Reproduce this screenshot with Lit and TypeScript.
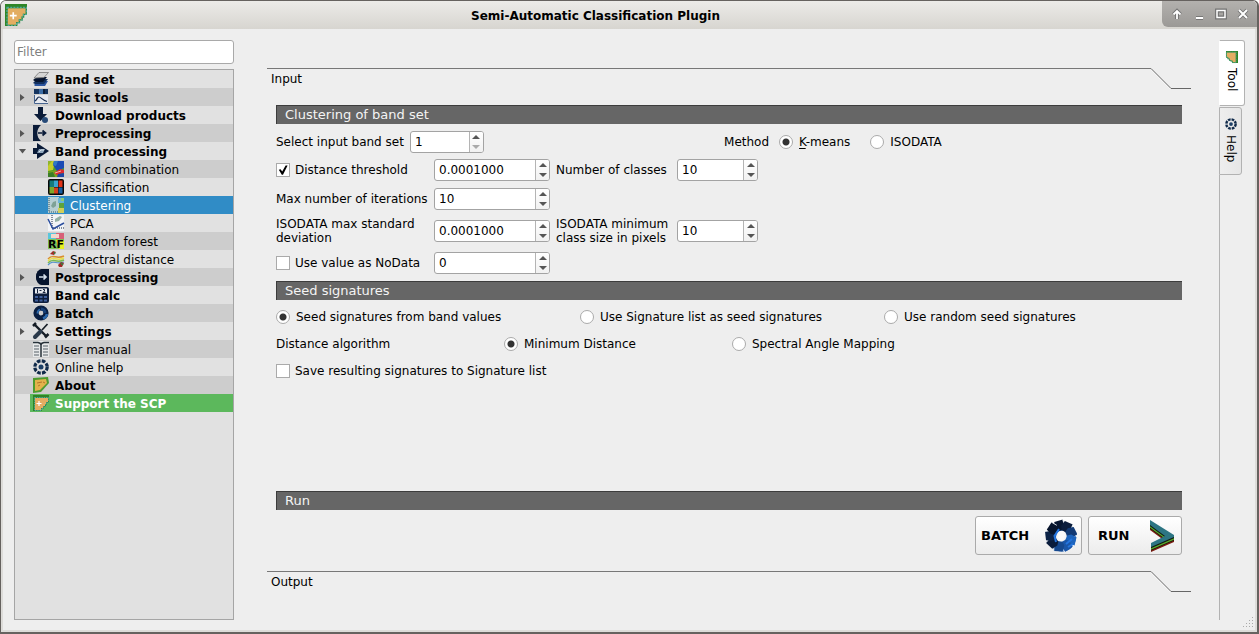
import { LitElement, html, css, svg, nothing } from "lit";
import { customElement, property, state } from "lit/decorators.js";
import { classMap } from "lit/directives/class-map.js";

const leaf = (plus: boolean) => svg`
  <path d="M0 0H16V8H14V10H13V12H11V14H9V16H0Z" fill="#2f8526"/>
  <path d="M2 3H15V7H13V9H12V11H10V13H8V15H2Z" fill="#e3ad62"/>
  <path d="M1.500 2.500H15.500V7.500H13.500V9.500H12.500V11.500H10.500V13.500H8.500V15.500H1.500Z" fill="none" stroke="#4fa79b" stroke-dasharray="1.500 .8"/>
  ${plus ? svg`<path d="M3.500 8.500H8.500M6 6V11" stroke="#fff" stroke-width="1.200"/>` : nothing}`;

const wheel = (r: number, w: number) => svg`
  <circle cx="8" cy="8" r="${r}" fill="none" stroke="#102a4a" stroke-width="${w}" stroke-dasharray="3.600 1.270"/>
  <circle cx="8" cy="8" r="2.500" fill="#1c3f66"/>`;

const runLayer = "M5 1L29 16V18L6 28V24L20 17L5 6Z";

const ringShades = ["#071630", "#0b1d3c", "#123a75", "#1d64bd", "#1a56a8", "#16498f", "#0a1c3b", "#0c2347", "#06142c"];

const icons: Record<string, unknown> = {
  leafplus: leaf(true),
  leaf: leaf(false),
  bandset: svg`
    <path d="M1 14L5 10H15L12 15H2Z" fill="#2a55a0"/>
    <path d="M0 12L4 8H15L11 13H2Z" fill="#12305e"/>
    <path d="M0 9L4 6H14L10 11H3Z" fill="#06142e"/>
    <path d="M1 7L6 1.500H15.500L11 6.500Z" fill="#d4d4d4" stroke="#777" stroke-width=".8"/>`,
  basic: svg`
    <path d="M1 0H15V5H1Z" fill="#15345f"/><path d="M6 0H10V5H6Z" fill="#3c6da6"/><path d="M10 0H12V5H10Z" fill="#0b1d38"/>
    <path d="M1 6H15V15H1Z" fill="#e6e9ef"/>
    <path d="M1.500 6V14.500H15" fill="none" stroke="#47648f"/>
    <path d="M2 12C4 11 4 8 6 8S9 11 14 12.500" fill="none" stroke="#1b2f52" stroke-width="1.200"/>`,
  download: svg`<path d="M5 0H10V7H14L7.500 14L1 7H5Z" fill="#0a1b38"/><circle cx="12" cy="13" r="3" fill="#264a78"/>`,
  pre: svg`<path d="M0 0H8C3 4 3 12 8 16H0Z" fill="#0a1b38"/><path d="M5 8H12M9.500 5.500L12.500 8L9.500 10.500" fill="none" stroke="#0a1b38" stroke-width="1.700"/>`,
  process: svg`<path d="M4 0L16 8L4 16V11H0V5H4Z" fill="#0a1b38"/><path d="M4 10L6 6H12L10 10H5Z" fill="#8ea5bb"/><path d="M6 9L8 7H11" stroke="#dbe5ec" fill="none"/>`,
  combo: svg`<path d="M0 0H16V16H0Z" fill="#4f9a2d"/><path d="M0 0H7L5 9L0 10Z" fill="#c4cc2a"/><path d="M0 0H4L0 5Z" fill="#8fb52b"/><path d="M6 0H16V7L9 10L5 4Z" fill="#1a4ab4"/><path d="M6 0H10L8 5L5 4Z" fill="#2f78c4"/><path d="M0 11L8 9L11 16H0Z" fill="#77a51f"/><path d="M0 12L5 11L7 16H0Z" fill="#3c7d28"/><path d="M6 12L12 8L16 9V12L9 14Z" fill="#de2a2f"/><path d="M10 13L16 12V16H9Z" fill="#1e47a5"/><path d="M7 12L13 10" stroke="#f0b1a8"/>`,
  classes: svg`<rect width="16" height="16" rx="2" fill="#080808"/><path d="M1.500 1.500H6V8H1.500Z" fill="#167b7b"/><path d="M6 1.500H10V8H6Z" fill="#3aa5cf"/><path d="M10.500 1.500H14.500V8H10.500Z" fill="#e13317"/><path d="M1.500 8H6V14.500H1.500Z" fill="#7ea82a"/><path d="M6 8.500H10V14.500H6Z" fill="#d4411c"/><path d="M10.500 8.500H14.500V14.500H10.500Z" fill="#175ea2"/>`,
  cluster: svg`<path d="M0 0H11V16H0Z" fill="#b7cfd3"/><path d="M1 1V15H10" fill="none" stroke="#32586b" stroke-dasharray="1 1"/><path d="M3 9L5 5L8 4L8 9L5 11Z" fill="#7ea296"/><path d="M10 1H16V6H10Z" fill="#68b5d7"/><path d="M11 6H16V11H11Z" fill="#5da33c"/><path d="M10 11H16V16H10Z" fill="#d1cf5a"/><path d="M13 1H16V4H13Z" fill="#8ccb78"/>`,
  pca: svg`<path d="M0 0H16V16H0Z" fill="#f2f4f6"/><path d="M7 4L12 1L14 2L11 6L7 7Z" fill="#94b0a5"/><path d="M4 0V13H16" stroke="#172640" stroke-dasharray="1 1" fill="none"/><path d="M0 4L5 14L16 8" fill="none" stroke="#2c4e9d" stroke-width="1.500"/>`,
  forest: svg`<path d="M0 0H8V8H0Z" fill="#59c6dc"/><path d="M8 0H16V6H8Z" fill="#d86178"/><path d="M3 1H11V5H3Z" fill="#f2d8cc"/><path d="M0 6H16V16H0Z" fill="#7dc35a"/><path d="M8 7H16V16H11Z" fill="#e7ef20"/><text x="8" y="15" text-anchor="middle" font-family="DejaVu Sans" font-size="11" font-weight="700">RF</text>`,
  spectral: svg`<path d="M0 8C5 2 8 9 16 5" fill="none" stroke="#da8d2c" stroke-width="1.500"/><path d="M0 10C5 4 8 11 16 7" fill="none" stroke="#e9df4a" stroke-width="1.500"/><path d="M0 12C5 6 8 13 16 9" fill="none" stroke="#79b953" stroke-width="1.500"/><path d="M0 14C5 8 8 14 16 11" fill="none" stroke="#5793cc" stroke-width="1.200"/><path d="M2 3L5 0L8 1L6 4Z" fill="#a22b26"/><path d="M10 14L13 11L16 12L14 16H11Z" fill="#a22b26"/><path d="M6 1L7 3M13 12L15 14" stroke="#328642" stroke-width="1.300"/>`,
  post: svg`<path d="M11 0H16V16H11A8 8 0 0 1 11 0Z" fill="#06142e"/><path d="M9 0H16V16H9A6 8 0 0 1 9 0Z" fill="#06142e"/><path d="M6 8H13M10.500 5.500L13 8L10.500 10.500" fill="none" stroke="#d4dfea" stroke-width="1.700"/>`,
  calc: svg`<rect width="16" height="16" rx="2" fill="#0d1d3b"/><path d="M2 1.500H14V6.500H2Z" fill="#e6e9ee"/><path d="M4.500 2V6M6.500 3.500H8.500M10 2.500H11.500V4L10 5.500H12.500" fill="none" stroke="#16233c"/><path d="M2 9H5V11H2ZM6.500 9H9.500V11H6.500ZM11 9H14V11H11ZM2 12.500H5V14.500H2ZM6.500 12.500H9.500V14.500H6.500ZM11 12.500H14V14.500H11Z" fill="#3f5f9c"/>`,
  batch: svg`<circle cx="8" cy="8" r="5" fill="none" stroke="#091f43" stroke-width="5.200"/><path d="M8 4A4 4 0 0 1 12 8" fill="none" stroke="#173f76" stroke-width="3"/><path d="M10 13.500A6 6 0 0 0 14 9" fill="none" stroke="#2b69ad" stroke-width="2.500"/><path d="M7 4.500A4 4 0 0 0 4.500 8.500" fill="none" stroke="#2b69ad" stroke-width="1.800"/>`,
  settings: svg`<path d="M2 2L13 13" stroke="#161d26" stroke-width="2.400"/><path d="M14.500 1L9 7" stroke="#161d26" stroke-width="1.700"/><path d="M7.500 8.500L2 14" stroke="#2b3a4b" stroke-width="4" stroke-linecap="round"/><path d="M0 3L3 0M12 14.500L15.500 11" stroke="#161d26" stroke-width="2.500"/>`,
  manual: svg`<path d="M0 0H16V16H0Z" fill="#e6e8e9"/><path d="M0 1.500H5Q8 2 8 4Q8 2 11 1.500H16M8 4V16" fill="none" stroke="#273139" stroke-width="1.500"/><path d="M1 5H6M1 8H6M1 11H6M1 14H6M10 5H15M10 8H15M10 11H15M10 14H15" stroke="#566169" stroke-width="1.200"/>`,
  help: wheel(6.2, 3.2),
  about: svg`<path d="M0 1L15 0L16 6L8 15L0 16Z" fill="#4c9b2e"/><path d="M2 3L13 2L14 6L7 13L2 14Z" fill="#e3b24b"/><path d="M4 6L9 5M5 9L7 8M10 5L12 6" stroke="#b4762b"/>`,
};

const icon = (name: string) => html`<svg class="icon" viewBox="0 0 16 16" aria-hidden="true">${icons[name]}</svg>`;

type Item = { label: string; icon: string; kind?: "child" | "plain" | "support"; arrow?: "open" | "closed" };

const items: Item[] = [
  { label: "Band set", icon: "bandset" },
  { label: "Basic tools", icon: "basic", arrow: "closed" },
  { label: "Download products", icon: "download" },
  { label: "Preprocessing", icon: "pre", arrow: "closed" },
  { label: "Band processing", icon: "process", arrow: "open" },
  { label: "Band combination", icon: "combo", kind: "child" },
  { label: "Classification", icon: "classes", kind: "child" },
  { label: "Clustering", icon: "cluster", kind: "child" },
  { label: "PCA", icon: "pca", kind: "child" },
  { label: "Random forest", icon: "forest", kind: "child" },
  { label: "Spectral distance", icon: "spectral", kind: "child" },
  { label: "Postprocessing", icon: "post", arrow: "closed" },
  { label: "Band calc", icon: "calc" },
  { label: "Batch", icon: "batch" },
  { label: "Settings", icon: "settings", arrow: "closed" },
  { label: "User manual", icon: "manual", kind: "plain" },
  { label: "Online help", icon: "help", kind: "plain" },
  { label: "About", icon: "about" },
  { label: "Support the SCP", icon: "leafplus", kind: "support" },
];

@customElement("spin-box")
export class SpinBox extends LitElement {
  @property() value = "0";
  @property() label = "";
  @property({ type: Number }) decimals = 0;
  @property({ type: Number }) min = 0;

  static styles = css`
    :host { display: block; }
    .spin { display: flex; box-sizing: border-box; height: 22px; border: 1px solid #a3a3a3; border-radius: 3px; background: #fff; overflow: hidden; }
    .field { flex: 1; min-width: 0; border: 0; padding: 0 4px; outline: none; background: transparent; color: #000; font: 12px "DejaVu Sans", sans-serif; }
    .steps { display: flex; flex-direction: column; width: 13px; border-left: 1px solid #b4b4b4; background: linear-gradient(#fff, #f1f1f1); }
    .step { flex: 1; display: flex; align-items: center; justify-content: center; min-height: 0; border: 0; padding: 0; background: none; }
    .glyph { width: 8px; height: 4px; fill: #555; }
    .step:disabled .glyph { fill: #aaa; }
  `;

  private step(direction: number) {
    const next = Number(this.value) + direction / 10 ** this.decimals;
    this.value = Math.max(this.min, next).toFixed(this.decimals ? 7 : 0);
  }

  render() {
    return html`<div class="spin">
      <input class="field" aria-label=${this.label} .value=${this.value}
        @change=${(e: Event) => (this.value = (e.target as HTMLInputElement).value)} />
      <div class="steps">
        <button class="step" type="button" aria-label="Increase" @click=${() => this.step(1)}><svg class="glyph" viewBox="0 0 8 4"><path d="M0 4L4 0L8 4Z"/></svg></button>
        <button class="step" type="button" aria-label="Decrease" ?disabled=${this.min > 0 && Number(this.value) <= this.min} @click=${() => this.step(-1)}><svg class="glyph" viewBox="0 0 8 4"><path d="M0 0L4 4L8 0Z"/></svg></button>
      </div>
    </div>`;
  }
}

@customElement("app-root")
export class AppRoot extends LitElement {
  @state() private selected = "Clustering";

  static styles = css`
    :host { display: block; font: 12px/14px "DejaVu Sans", sans-serif; color: #000; }
    .window { box-sizing: border-box; min-height: 100vh; display: flex; flex-direction: column; border: 1px solid #66625f; border-right-width: 2px; border-bottom-width: 2px; border-radius: 6px 6px 0 0; background: #eee; position: relative; box-shadow: inset 2px 0 #dddcd9, inset -2px -2px #dddcd9; }
    .titlebar { display: flex; align-items: stretch; height: 28px; background: linear-gradient(#ecebe8, #d7d5d0); border-radius: 5px 5px 0 0; }
    .logo { padding: 3px 0 0 4px; width: 24px; }
    .logo .icon { width: 22px; height: 22px; }
    .title { flex: 1; margin: 0; text-align: center; font-size: 12px; line-height: 30px; font-weight: 700; }
    .controls { display: flex; align-items: center; gap: 8px; height: 26px; padding: 0 7px 0 8px; background: linear-gradient(#b3b1ae, #9b9996); border-bottom-left-radius: 6px; border-top-right-radius: 5px; }
    .control { display: flex; border: 0; padding: 0; background: none; }
    .control svg { width: 14px; height: 14px; fill: none; }
    .body { flex: 1; display: flex; padding: 11px 12px 12px 13px; }

    .sidebar { flex: none; width: 220px; display: flex; flex-direction: column; gap: 5px; }
    .filter { box-sizing: border-box; width: 100%; height: 24px; border: 1px solid #a9a9a9; border-radius: 3px; padding: 0 2px; outline: none; background: #fff; font: 12px "DejaVu Sans", sans-serif; }
    .filter::placeholder { color: #808080; opacity: 1; }
    .tree { flex: 1; margin: 0; padding: 0; list-style: none; border: 1px solid #a5a5a5; background: #e1e1e1; }
    .row { display: flex; height: 18px; }
    .row:nth-child(even) { background: #cdcdcd; }
    .branch { flex: none; display: flex; align-items: center; padding-left: 4px; width: 11px; }
    .branch svg { width: 7px; height: 7px; fill: #555; }
    .entry { flex: 1; display: flex; align-items: center; gap: 6px; border: 0; padding: 0 3px; background: none; color: #000; font: 700 12px/18px "DejaVu Sans", sans-serif; text-align: left; }
    .label { padding-top: 2px; }
    .plain .entry, .child .entry { font-weight: 400; }
    .child .entry { padding-left: 18px; }
    .support .entry { background: #5cb85c; color: #fff; }
    .row.selected { background: #308cc6; }
    .selected .entry { color: #fff; }
    .icon { flex: none; display: block; width: 16px; height: 16px; overflow: visible; }

    .main { flex: 1; min-width: 0; display: flex; flex-direction: column; margin: 28px 28px 28px 33px; }
    .fold { display: flex; align-items: flex-start; margin: 0; height: 21px; font-size: 12px; font-weight: 400; }
    .foldname { flex: 1; padding: 3px 4px; border-top: 1px solid #777; }
    .slope { flex: none; width: 40px; height: 21px; fill: none; }
    .panel { flex: 1; display: flex; flex-direction: column; gap: 6px; padding: 16px 9px 16px; }
    .heading { margin: 0; box-sizing: border-box; height: 19px; padding-left: 8px; border: solid #3c3c3c; border-width: 1px 0 0 1px; background: #666; color: #f4f4f4; font-size: 13px; line-height: 18px; font-weight: 400; }
    .line { display: flex; align-items: center; height: 22px; padding-top: 1px; }
    .method { display: flex; align-items: center; gap: 10px; margin: 0 auto; }
    .method .option + .option { margin-left: 10px; }
    .small { width: 74px; margin-left: 6px; }
    .form { display: grid; grid-template-columns: 152px 116px 115px 81px; gap: 7px 6px; align-items: center; }
    .stack { display: flex; flex-direction: column; gap: 7px; padding-top: 1px; }
    .first { grid-column: 1; }
    .choices { display: grid; grid-template-columns: repeat(3, 1fr); column-gap: 6px; align-items: center; height: 20px; }
    .quarters { grid-template-columns: repeat(4, 1fr); }
    .seed { margin-top: 1px; }
    .option { display: flex; align-items: center; gap: 6px; white-space: nowrap; }
    .option.first { gap: 5px; }
    .tick { flex: none; appearance: none; box-sizing: border-box; width: 14px; height: 14px; margin: 0; border: 1px solid #aaa; background: #fff; display: grid; place-items: center; }
    .radio { border-radius: 50%; }
    .radio:checked { background: radial-gradient(circle, #333 0 3px, #fff 4px); }
    .box:checked::before { content: ""; width: 10px; height: 10px; background: #000; clip-path: polygon(8% 48%, 26% 42%, 42% 66%, 76% 4%, 96% 4%, 50% 98%, 38% 98%); }
    .accel { text-decoration: underline; text-underline-offset: 2px; }
    .run { margin-top: auto; }
    .actions { display: flex; justify-content: flex-end; gap: 6px; }
    .action { display: flex; align-items: center; justify-content: space-between; box-sizing: border-box; height: 39px; border: 1px solid #aaa; border-radius: 3px; padding: 0 4px 0 5px; background: linear-gradient(#fff, #ececec); color: #000; font: 700 13px "DejaVu Sans", sans-serif; }
    .batch { width: 107px; }
    .go { width: 94px; padding-left: 9px; }
    .action svg { width: 32px; height: 34px; }

    .rail { flex: none; width: 26px; display: flex; flex-direction: column; align-items: flex-start; gap: 1px; }
    .tab { writing-mode: vertical-rl; display: flex; align-items: center; gap: 5px; box-sizing: border-box; width: 23px; height: 68px; border: 1px solid #b2b2b2; border-radius: 0 3px 3px 0; padding: 10px 0; background: linear-gradient(90deg, #eee, #e6e6e6); color: #000; font: 12px/14px "DejaVu Sans", sans-serif; }
    .tab.current { width: 26px; height: 66px; border-left-color: #fff; background: #fff; }
    .tab .icon { width: 12px; height: 12px; }
    .tab .leaf { transform: rotate(90deg); }
    .edge { flex: 1; margin-top: -1px; border-left: 1px solid #b2b2b2; }
    .grip { position: absolute; right: 3px; bottom: 3px; width: 13px; height: 12px; fill: #aaa; }
  `;

  private fold(name: string) {
    return html`<h2 class="fold"><span class="foldname">${name}</span>
      <svg class="slope" viewBox="0 0 40 21" aria-hidden="true"><path d="M0 1.500L20 21.500H40" stroke="#fff"/><path d="M0 .5L20 20.500H40" stroke="#666"/></svg></h2>`;
  }

  private radio(group: string, label: unknown, checked = false) {
    return html`<label class="option"><input class="tick radio" type="radio" name=${group} ?checked=${checked} />${label}</label>`;
  }

  private check(label: string, checked = false) {
    return html`<label class="option first"><input class="tick box" type="checkbox" ?checked=${checked} />${label}</label>`;
  }

  private row(item: Item) {
    const classes = { row: true, [item.kind ?? "top"]: true, selected: item.label === this.selected };
    return html`<li class=${classMap(classes)}>
      <span class="branch">${item.arrow
        ? html`<svg viewBox="0 0 7 7"><path d=${item.arrow === "open" ? "M0 1H7L3.5 5.5Z" : "M1 0V7L5.5 3.5Z"}/></svg>`
        : nothing}</span>
      <button class="entry" type="button" @click=${() => (this.selected = item.label)}>${icon(item.icon)}<span class="label">${item.label}</span></button>
    </li>`;
  }

  render() {
    const glyphs: [string, string, number][] = [
      ["Shade", "M7 12V4M3.5 7.500L7 4L10.500 7.500", 1.8],
      ["Minimize", "M4 11H11", 2],
      ["Maximize", "M3 3.500H11V10.500H3Z", 1.5],
      ["Close", "M3 3L11 11M11 3L3 11", 2],
    ];
    return html`<div class="window">
      <header class="titlebar">
        <div class="logo">${icon("leafplus")}</div>
        <h1 class="title">Semi-Automatic Classification Plugin</h1>
        <div class="controls">
          ${glyphs.map(([name, d, w]) => html`<button class="control" type="button" aria-label=${name}>
            <svg viewBox="0 0 14 14"><path d=${d} stroke="#727272" stroke-width="3.8"/><path d=${d} stroke="#fff" stroke-width=${w}/></svg></button>`)}
        </div>
      </header>
      <div class="body">
        <nav class="sidebar">
          <input class="filter" type="text" placeholder="Filter" aria-label="Filter" />
          <ul class="tree">${items.map((item) => this.row(item))}</ul>
        </nav>
        <main class="main">
          ${this.fold("Input")}
          <section class="panel">
            <h3 class="heading">Clustering of band set</h3>
            <div class="line">
              <span>Select input band set</span>
              <spin-box class="small" label="Select input band set" value="1" .min=${1}></spin-box>
              <div class="method" role="radiogroup" aria-label="Method">
                <span>Method</span>
                ${this.radio("method", html`<span><span class="accel">K</span>-means</span>`, true)}
                ${this.radio("method", "ISODATA")}
              </div>
            </div>
            <div class="form">
              ${this.check("Distance threshold", true)}
              <spin-box label="Distance threshold" value="0.0001000" .decimals=${4}></spin-box>
              <span>Number of classes</span>
              <spin-box label="Number of classes" value="10"></spin-box>
              <span class="first">Max number of iterations</span>
              <spin-box label="Max number of iterations" value="10"></spin-box>
              <span class="first">ISODATA max standard deviation</span>
              <spin-box label="ISODATA max standard deviation" value="0.0001000" .decimals=${4}></spin-box>
              <span>ISODATA minimum class size in pixels</span>
              <spin-box label="ISODATA minimum class size in pixels" value="10"></spin-box>
              ${this.check("Use value as NoData")}
              <spin-box label="NoData value" value="0"></spin-box>
            </div>
            <h3 class="heading seed">Seed signatures</h3>
            <div class="stack">
              <div class="choices">
                ${this.radio("seed", "Seed signatures from band values", true)}
                ${this.radio("seed", "Use Signature list as seed signatures")}
                ${this.radio("seed", "Use random seed signatures")}
              </div>
              <div class="choices quarters">
                <span>Distance algorithm</span>
                ${this.radio("distance", "Minimum Distance", true)}
                ${this.radio("distance", "Spectral Angle Mapping")}
              </div>
              <div class="choices">${this.check("Save resulting signatures to Signature list")}</div>
            </div>
            <h3 class="heading run">Run</h3>
            <div class="actions">
              <button class="action batch" type="button">BATCH
                <svg viewBox="0 0 32 34" aria-hidden="true">
                  <ellipse cx="17" cy="18" rx="10" ry="10.500" fill="none" stroke="#1c5db4" stroke-width="8"/>
                  ${ringShades.map((shade, i) => svg`<g transform="rotate(${i * 40 - 10} 16 17)"><path d="M11.800 2L20.500 1L21.500 7L18.500 11.500H13.500L11 8Z" fill="${shade}"/><path d="M20.500 1L21.500 7" stroke="#eef3f9" stroke-width=".8"/></g>`)}
                  <path d="M14 10L9.500 17L11 23M21 25L27 20M23 28L28 25" fill="none" stroke="#2474dd" stroke-width="2"/>
                  <path d="M14.500 13L18 12L20 16L18.500 21L15 22L13 18.500Z" fill="#fafafa"/>
                </svg></button>
              <button class="action go" type="button">RUN
                <svg viewBox="0 0 32 34" aria-hidden="true">
                  <path d=${runLayer} transform="translate(0 5)" fill="#7a1c12"/>
                  <path d=${runLayer} transform="translate(0 3.500)" fill="#15120c"/>
                  <path d=${runLayer} transform="translate(0 2.800)" fill="#5aa82b"/>
                  <path d=${runLayer} transform="translate(0 1.200)" fill="#101c14"/>
                  <path d=${runLayer} fill="#2d7583"/>
                </svg></button>
            </div>
          </section>
          ${this.fold("Output")}
        </main>
        <div class="rail" role="tablist">
          <button class="tab current" role="tab" aria-selected="true"><span class="leaf">${icon("leaf")}</span>Tool</button>
          <button class="tab" role="tab" aria-selected="false">${icon("help")}Help</button>
          <div class="edge"></div>
        </div>
      </div>
      <svg class="grip" viewBox="0 0 13 12" aria-hidden="true"><path d="M11 0h1v1h-1zM8 3h1v1h-1zM11 3h1v1h-1zM5 6h1v1h-1zM8 6h1v1h-1zM11 6h1v1h-1zM2 9h1v1h-1zM5 9h1v1h-1zM8 9h1v1h-1zM11 9h1v1h-1z"/></svg>
    </div>`;
  }
}
